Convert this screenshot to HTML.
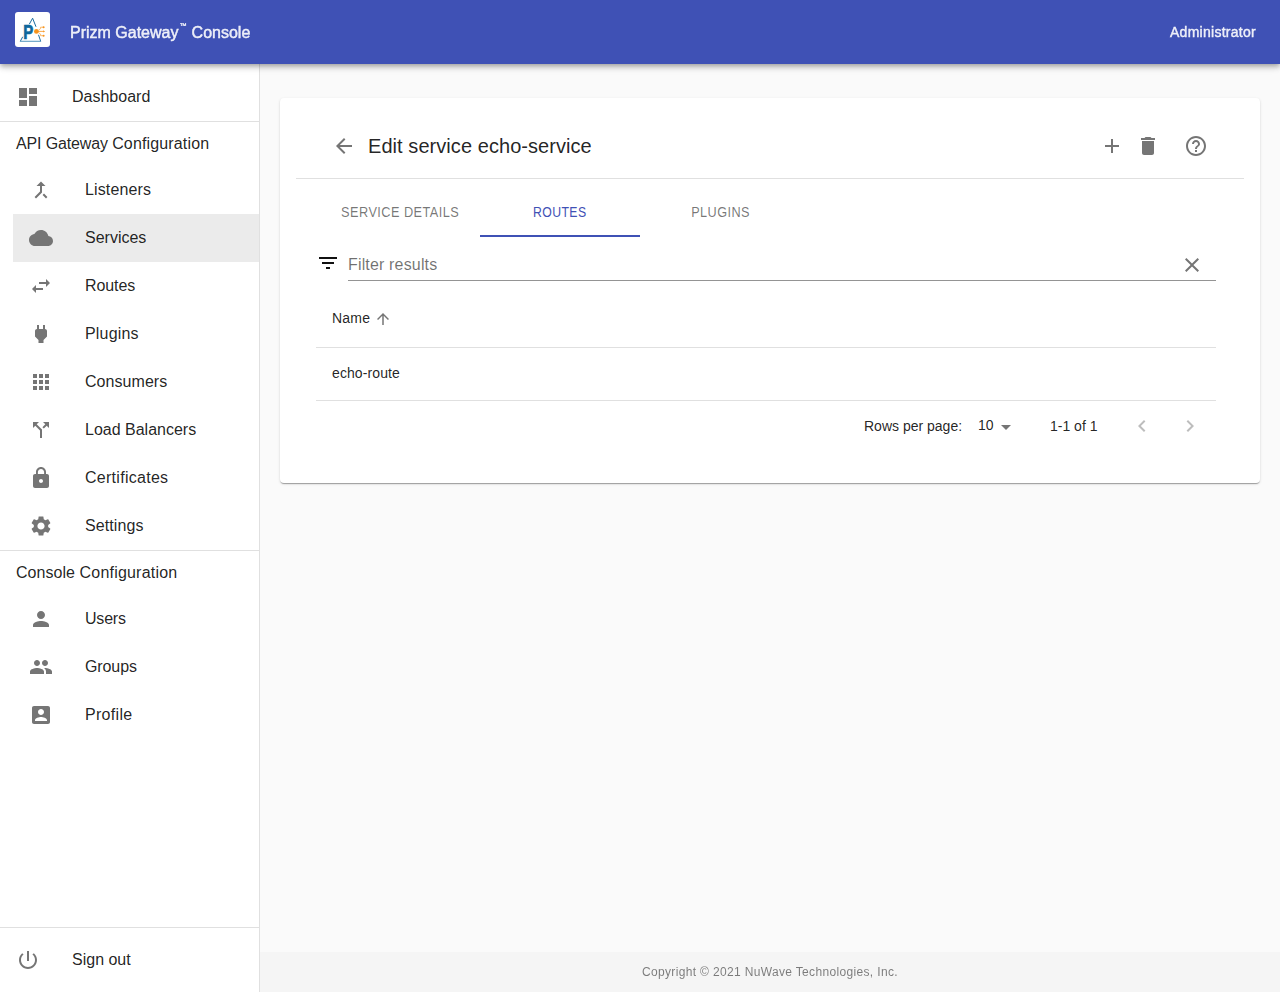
<!DOCTYPE html>
<html lang="en">
<head>
<meta charset="utf-8">
<title>Prizm Gateway Console</title>
<style>
*{box-sizing:border-box;margin:0;padding:0}
html,body{width:1280px;height:992px;overflow:hidden;background:#fafafa;font-family:"Liberation Sans",sans-serif;color:rgba(0,0,0,.87)}
svg{display:block}
.abs{position:absolute}
#appbar{position:absolute;left:0;top:0;width:1280px;height:64px;background:#3f51b5;z-index:5;box-shadow:0 2px 4px -1px rgba(0,0,0,.2),0 4px 5px 0 rgba(0,0,0,.14),0 1px 10px 0 rgba(0,0,0,.12)}
#logo{position:absolute;left:15px;top:12px;width:35px;height:35px;background:#fff;border-radius:3px}
#title{will-change:transform;position:absolute;left:70px;top:21px;height:24px;line-height:24px;font-size:16px;color:rgba(255,255,255,.88);-webkit-text-stroke:.45px rgba(255,255,255,.88);white-space:nowrap}
#admin{will-change:transform;position:absolute;right:23.7px;top:20px;letter-spacing:.27px;height:24px;line-height:24px;font-size:14px;color:rgba(255,255,255,.88);-webkit-text-stroke:.4px rgba(255,255,255,.88);white-space:nowrap}
#drawer{position:absolute;left:0;top:64px;width:260px;height:928px;background:#fff;border-right:1px solid #e0e0e0}
.item{position:absolute;left:0;width:259px;height:48px}
.item .ic{position:absolute;top:12px;width:24px;height:24px;fill:#757575}
.item .tx{position:absolute;top:12px;height:24px;line-height:24px;font-size:16px;white-space:nowrap;color:rgba(0,0,0,.87)}
.top .ic{left:16px}.top .tx{left:72px}
.sub .ic{left:29px}.sub .tx{left:85px}
.sub.active{left:13px;width:246px;background:#ebebeb}
.sub.active .ic{left:16px}.sub.active .tx{left:72px}
.hdr{position:absolute;left:16px;height:24px;line-height:24px;font-size:16px;white-space:nowrap;color:rgba(0,0,0,.87)}
.hr{position:absolute;left:0;width:259px;height:1px;background:#e0e0e0}
#footer{position:absolute;left:260px;top:952px;width:1020px;height:40px;background:#f5f5f5;text-align:center;line-height:40px;font-size:12px;letter-spacing:.34px;color:rgba(0,0,0,.5)}
#card{position:absolute;left:280px;top:98px;width:980px;height:385px;background:#fff;border-radius:4px;box-shadow:0 2px 1px -1px rgba(0,0,0,.2),0 1px 1px 0 rgba(0,0,0,.14),0 1px 3px 0 rgba(0,0,0,.12)}
#card .ic{position:absolute;width:24px;height:24px;fill:#757575}
#ctitle{position:absolute;left:88px;top:32px;height:32px;line-height:32px;font-size:20px;letter-spacing:.06px;white-space:nowrap}
.tab{position:absolute;top:90px;width:160px;height:48px;line-height:48px;text-align:center;font-size:14.5px;letter-spacing:.5px;color:rgba(0,0,0,.54);white-space:nowrap}
.tab span{display:inline-block;transform-origin:50% 50%}
.tab.on{color:#3f51b5}
.line{position:absolute;height:1px;background:#e0e0e0}
.t14{position:absolute;font-size:14px;height:20px;line-height:20px;white-space:nowrap}
</style>
</head>
<body>
<div id="appbar">
  <div id="logo"><svg width="35" height="35" viewBox="0 0 35 35">
<g fill="none" stroke="#1c6c9f" stroke-width="1" stroke-linecap="butt">
<path d="M14.3 12.2L17.6 6.2L21 14.8"/>
<path d="M7.7 24.8L5.3 29.3"/>
<path d="M23.5 22.8L25.7 29.3"/>
</g>
<path d="M5 29.3H26" stroke="#5f9cc2" stroke-width="1.1" fill="none"/>
<text x="8.3" y="26.6" style="font-family:'Liberation Sans',sans-serif;font-weight:bold;font-size:19.6px" fill="#0e679c" stroke="#0e679c" stroke-width=".7" textLength="10" lengthAdjust="spacingAndGlyphs">P</text>
<g fill="#f7941d" stroke="#f7941d">
<circle cx="21.4" cy="19.4" r="2.4" stroke="none"/>
<path d="M23 19.4H29" stroke-width=".8" fill="none"/>
<path d="M23.5 18.2L25.6 16.6V15.2H28.5" stroke-width=".8" fill="none" opacity=".8"/>
<path d="M23.5 20.6L25.6 22.2V23.7H28.5" stroke-width=".8" fill="none" opacity=".8"/>
<path d="M28.3 18.3L30 19.4L28.3 20.5Z" stroke="none"/>
<circle cx="28.6" cy="15.2" r="1" stroke="none"/>
<circle cx="28.6" cy="23.7" r="1" stroke="none"/>
</g>
</svg></div>
  <div id="title">Prizm Gateway<span style="font-size:7px;position:relative;top:-10px;left:1px;-webkit-text-stroke:.3px rgba(255,255,255,.88)">™</span><span style="margin-left:1.7px"> Console</span></div>
  <div id="admin">Administrator</div>
</div>
<div id="drawer">
<div class="item top" style="top:9px"><svg class="ic" viewBox="0 0 24 24"><path d="M3 13h8V3H3v10zm0 8h8v-6H3v6zm10 0h8V11h-8v10zm0-18v6h8V3h-8z"/></svg><div class="tx">Dashboard</div></div>
<div class="hr" style="top:57px"></div>
<div class="hdr" style="top:68px"><span style="letter-spacing:-.14px">API Gateway </span><span style="letter-spacing:.15px">Configuration</span></div>
<div class="item sub" style="top:102px"><svg class="ic" viewBox="0 0 24 24"><path d="M17 20.41L18.41 19 15 15.59 13.59 17 17 20.41zM7.5 8H11v5.59L5.59 19 7 20.41l6-6V8h3.5L12 3.5 7.5 8z"/></svg><div class="tx" style="letter-spacing:0.12px">Listeners</div></div>
<div class="item sub active" style="top:150px"><svg class="ic" viewBox="0 0 24 24"><path d="M19.35 10.04C18.67 6.59 15.64 4 12 4 9.11 4 6.6 5.64 5.35 8.04 2.34 8.36 0 10.91 0 14c0 3.31 2.69 6 6 6h13c2.76 0 5-2.24 5-5 0-2.64-2.05-4.78-4.65-4.96z"/></svg><div class="tx">Services</div></div>
<div class="item sub" style="top:198px"><svg class="ic" viewBox="0 0 24 24"><path d="M6.99 11L3 15l3.99 4v-3H14v-2H6.99v-3zM21 9l-3.99-4v3H10v2h7.01v3L21 9z"/></svg><div class="tx" style="letter-spacing:-0.1px">Routes</div></div>
<div class="item sub" style="top:246px"><svg class="ic" viewBox="0 0 24 24"><path d="M16.01 7L16 3h-2v4h-4V3H8v4h-.01C7 6.99 6 7.99 6 8.99v5.49L9.5 18v3h5v-3l3.5-3.51v-5.5c0-1-1-2-1.99-1.99z"/></svg><div class="tx" style="letter-spacing:0.18px">Plugins</div></div>
<div class="item sub" style="top:294px"><svg class="ic" viewBox="0 0 24 24"><path d="M4 8h4V4H4v4zm6 12h4v-4h-4v4zm-6 0h4v-4H4v4zm0-6h4v-4H4v4zm6 0h4v-4h-4v4zm6-10v4h4V4h-4zm-6 4h4V4h-4v4zm6 6h4v-4h-4v4zm0 6h4v-4h-4v4z"/></svg><div class="tx" style="letter-spacing:0.05px">Consumers</div></div>
<div class="item sub" style="top:342px"><svg class="ic" viewBox="0 0 24 24"><path d="M14 4l2.29 2.29-2.88 2.88 1.42 1.42 2.88-2.88L20 10V4zm-4 0H4v6l2.29-2.29 4.71 4.7V20h2v-8.41l-5.29-5.3z"/></svg><div class="tx">Load Balancers</div></div>
<div class="item sub" style="top:390px"><svg class="ic" viewBox="0 0 24 24"><path d="M18 8h-1V6c0-2.76-2.24-5-5-5S7 3.24 7 6v2H6c-1.1 0-2 .9-2 2v10c0 1.1.9 2 2 2h12c1.1 0 2-.9 2-2V10c0-1.1-.9-2-2-2zm-6 9c-1.1 0-2-.9-2-2s.9-2 2-2 2 .9 2 2-.9 2-2 2zm3.1-9H8.900000000000001V6c0-1.71 1.39-3.1 3.1-3.1 1.71 0 3.1 1.39 3.1 3.1v2z"/></svg><div class="tx" style="letter-spacing:0.28px">Certificates</div></div>
<div class="item sub" style="top:438px"><svg class="ic" viewBox="0 0 24 24"><path d="M19.14 12.94c.04-.3.06-.61.06-.94 0-.32-.02-.64-.07-.94l2.03-1.58c.18-.14.23-.41.12-.61l-1.92-3.32c-.12-.22-.37-.29-.59-.22l-2.39.96c-.5-.38-1.03-.7-1.62-.94l-.36-2.54c-.04-.24-.24-.41-.48-.41h-3.84c-.24 0-.43.17-.47.41l-.36 2.54c-.59.24-1.13.57-1.62.94l-2.39-.96c-.22-.08-.47 0-.59.22L2.74 8.870000000000001c-.12.21-.08.47.12.61l2.03 1.58c-.05.3-.09.63-.09.94s.02.64.07.94l-2.03 1.58c-.18.14-.23.41-.12.61l1.92 3.32c.12.22.37.29.59.22l2.39-.96c.5.38 1.03.7 1.62.94l.36 2.54c.05.24.24.41.48.41h3.84c.24 0 .44-.17.47-.41l.36-2.54c.59-.24 1.13-.56 1.62-.94l2.39.96c.22.08.47 0 .59-.22l1.92-3.32c.12-.22.07-.47-.12-.61l-2.01-1.58zM12 15.6c-1.98 0-3.6-1.62-3.6-3.6s1.62-3.6 3.6-3.6 3.6 1.62 3.6 3.6-1.62 3.6-3.6 3.6z"/></svg><div class="tx" style="letter-spacing:0.1px">Settings</div></div>
<div class="hr" style="top:486px"></div>
<div class="hdr" style="top:497px"><span style="letter-spacing:.05px">Console </span><span style="letter-spacing:.2px">Configuration</span></div>
<div class="item sub" style="top:531px"><svg class="ic" viewBox="0 0 24 24"><path d="M12 12c2.21 0 4-1.79 4-4s-1.79-4-4-4-4 1.79-4 4 1.79 4 4 4zm0 2c-2.67 0-8 1.34-8 4v2h16v-2c0-2.660-5.330-4-8-4z"/></svg><div class="tx" style="letter-spacing:-0.2px">Users</div></div>
<div class="item sub" style="top:579px"><svg class="ic" viewBox="0 0 24 24"><path d="M16 11c1.66 0 2.990-1.340 2.990-3S17.660 5 16 5c-1.660 0-3 1.340-3 3s1.340 3 3 3zm-8 0c1.660 0 2.990-1.340 2.990-3S9.660 5 8 5C6.340 5 5 6.340 5 8s1.340 3 3 3zm0 2c-2.330 0-7 1.170-7 3.500V19h14v-2.500c0-2.330-4.670-3.500-7-3.500zm8 0c-.290 0-.620.020-.970.050 1.160.840 1.970 1.970 1.970 3.450V19h6v-2.500c0-2.330-4.670-3.500-7-3.500z"/></svg><div class="tx" style="letter-spacing:-0.1px">Groups</div></div>
<div class="item sub" style="top:627px"><svg class="ic" viewBox="0 0 24 24"><path d="M3 5v14c0 1.100.890 2 2 2h14c1.100 0 2-.900 2-2V5c0-1.100-.900-2-2-2H5c-1.110 0-2 .900-2 2zm12 4c0 1.660-1.340 3-3 3s-3-1.340-3-3 1.340-3 3-3 3 1.340 3 3zm-9 8c0-2 4-3.100 6-3.100s6 1.100 6 3.100v1H6v-1z"/></svg><div class="tx" style="letter-spacing:0.3px">Profile</div></div>
<div class="hr" style="top:863px"></div>
<div class="item top" style="top:872px"><svg class="ic" viewBox="0 0 24 24"><path d="M13 3h-2v10h2V3zm4.830 2.170l-1.420 1.420C17.990 7.860 19 9.810 19 12c0 3.870-3.130 7-7 7s-7-3.130-7-7c0-2.190 1.010-4.140 2.580-5.420L6.170 5.170C4.230 6.820 3 9.260 3 12c0 4.970 4.030 9 9 9s9-4.030 9-9c0-2.740-1.230-5.180-3.170-6.830z"/></svg><div class="tx">Sign out</div></div>
</div>
<div id="footer"><span style="display:inline-block;will-change:transform">Copyright © 2021 NuWave Technologies, Inc.</span></div>
<div id="card">
<svg class="ic" viewBox="0 0 24 24" style="left:52.0px;top:36.0px;width:24px;height:24px;"><path d="M20 11H7.83l5.59-5.59L12 4l-8 8 8 8 1.41-1.41L7.83 13H20v-2z"/></svg>
<div id="ctitle">Edit service echo-service</div>
<svg class="ic" viewBox="0 0 24 24" style="left:820px;top:36px;width:24px;height:24px;"><path d="M19 13h-6v6h-2v-6H5v-2h6V5h2v6h6v2z"/></svg>
<svg class="ic" viewBox="0 0 24 24" style="left:856.0px;top:36.0px;width:24px;height:24px;"><path d="M6 19c0 1.1.9 2 2 2h8c1.1 0 2-.9 2-2V7H6v12zM19 4h-3.5l-1-1h-5l-1 1H5v2h14V4z"/></svg>
<svg class="ic" viewBox="0 0 24 24" style="left:904.0px;top:36.0px;width:24px;height:24px;"><path d="M11 18h2v-2h-2v2zm1-16C6.48 2 2 6.48 2 12s4.48 10 10 10 10-4.48 10-10S17.52 2 12 2zm0 18c-4.41 0-8-3.59-8-8s3.59-8 8-8 8 3.59 8 8-3.59 8-8 8zm0-14c-2.21 0-4 1.79-4 4h2c0-1.1.9-2 2-2s2 .9 2 2c0 2-3 1.75-3 5h2c0-2.25 3-2.5 3-5 0-2.21-1.79-4-4-4z"/></svg>
<div class="line" style="left:16px;top:80px;width:948px"></div>
<div class="tab" style="left:40px"><span style="transform:scaleX(.88)">SERVICE DETAILS</span></div>
<div class="tab on" style="left:200px"><span style="transform:scaleX(.845);position:relative;left:.1px">ROUTES</span></div>
<div class="tab" style="left:360px"><span style="transform:scaleX(.875);position:relative;left:.2px">PLUGINS</span></div>
<div class="abs" style="left:200px;top:137px;width:160px;height:2px;background:#3f51b5"></div>
<svg class="ic" viewBox="0 0 24 24" style="left:36px;top:153px;width:24px;height:24px;fill:#111;"><path d="M10 18h4v-2h-4v2zM3 6v2h18V6H3zm3 7h12v-2H6v2z"/></svg>
<div class="abs" style="left:68px;top:155px;height:24px;line-height:24px;font-size:16px;letter-spacing:.16px;color:rgba(0,0,0,.56);white-space:nowrap">Filter results</div>
<div class="line" style="left:68px;top:182px;width:868px;background:#949494"></div>
<svg class="ic" viewBox="0 0 24 24" style="left:900.0px;top:155.0px;width:24px;height:24px;"><path d="M19 6.41L17.59 5 12 10.59 6.41 5 5 6.41 10.59 12 5 17.59 6.41 19 12 13.41 17.59 19 19 17.59 13.41 12z"/></svg>
<div class="t14" style="left:52px;top:210px;letter-spacing:.2px">Name</div>
<svg class="ic" viewBox="0 0 24 24" style="left:94.0px;top:212.0px;width:18px;height:18px;"><path d="M4 12l1.41 1.41L11 7.83V20h2V7.83l5.58 5.59L20 12l-8-8-8 8z"/></svg>
<div class="line" style="left:36px;top:249px;width:900px"></div>
<div class="t14" style="left:52px;top:265px;letter-spacing:.1px">echo-route</div>
<div class="line" style="left:36px;top:302px;width:900px"></div>
<div class="t14" style="left:584px;top:318px">Rows per page:</div>
<div class="t14" style="left:698px;top:317px">10</div>
<svg class="ic" viewBox="0 0 24 24" style="left:714.0px;top:317.0px;width:24px;height:24px;"><path d="M7 10l5 5 5-5z"/></svg>
<div class="t14" style="left:770px;top:318px">1-1 of 1</div>
<svg class="ic" viewBox="0 0 24 24" style="left:850px;top:316px;width:24px;height:24px;fill:#bdbdbd;"><path d="M15.41 7.41L14 6l-6 6 6 6 1.41-1.41L10.83 12z"/></svg>
<svg class="ic" viewBox="0 0 24 24" style="left:898px;top:316px;width:24px;height:24px;fill:#bdbdbd;"><path d="M10 6L8.59 7.41 13.17 12l-4.58 4.59L10 18l6-6z"/></svg>
</div>
</body>
</html>
